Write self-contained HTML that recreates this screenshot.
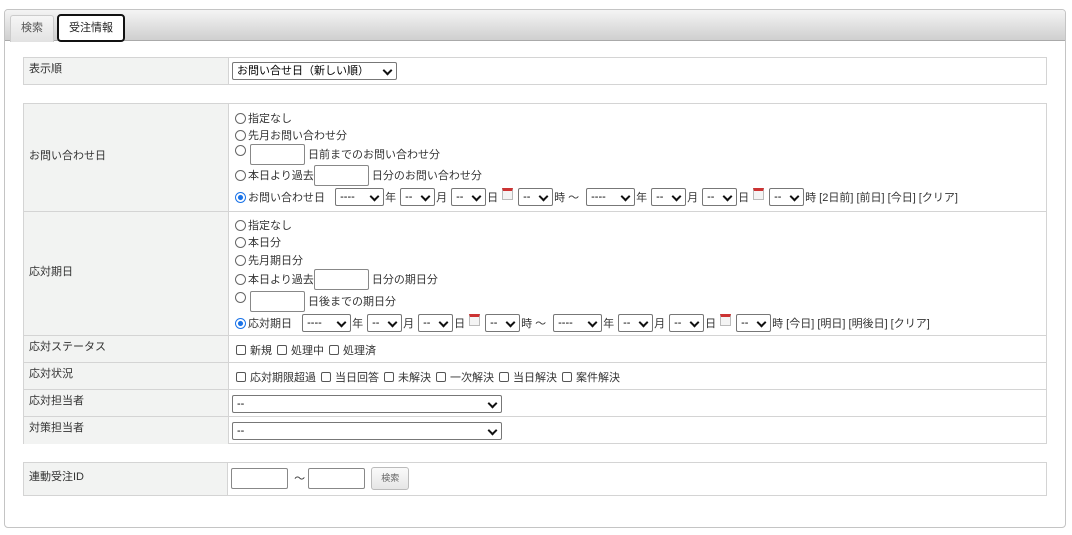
<!DOCTYPE html>
<html><head><meta charset="utf-8"><style>
*{box-sizing:border-box;margin:0;padding:0}
body{width:1072px;height:535px;background:#fff;font-family:"Liberation Sans","Noto Sans CJK JP",sans-serif;font-size:11px;color:#333;position:relative;overflow:hidden}
.panel{position:absolute;left:4px;top:9px;width:1062px;height:519px;border:1px solid #c4c4c4;border-radius:4px}
.hdr{position:absolute;left:0;top:0;width:1060px;height:31px;background:linear-gradient(#f4f4f4,#cfcfcf);border-bottom:1px solid #aaa;border-radius:3px 3px 0 0}
.tab1{position:absolute;left:5px;top:5px;width:44px;height:27px;background:linear-gradient(#f6f6f6,#e2e2e2);border:1px solid #ccc;border-bottom:none;border-radius:3px 3px 0 0;text-align:center;line-height:24px;color:#555}
.tab2{position:absolute;left:52px;top:4px;width:68px;height:28px;background:#fff;border:2px solid #111;border-radius:4px;text-align:center;line-height:24px;color:#222}
.t{position:absolute;border:1px solid #d4d4d4}
.lab{position:absolute;background:#f2f3f2;border-right:1px solid #d4d4d4;left:0;padding-left:5px}
.row{position:absolute;left:0;right:0;border-top:1px solid #d4d4d4}
.ln{position:absolute;left:211px;display:flex;align-items:center;white-space:nowrap;height:20px}
.rd{width:11px;height:11px;border:1px solid #666;border-radius:50%;margin-right:2px;display:inline-block}
.rd.on{border-color:#1a73e8;background:radial-gradient(#1a73e8 35%,#fff 45%)}
.cb{width:10px;height:10px;border:1px solid #555;border-radius:2px;display:inline-block;margin:0 4px 0 5px}
.cb:first-child{margin-left:0}
.in{display:inline-block;width:55px;height:21px;border:1px solid #888;border-radius:2px;background:#fff}
.sel{display:inline-block;height:18px;border:1px solid #777;border-radius:2px;background:#fff;position:relative;padding-left:4px;line-height:16px;font-size:11px;color:#000}
.sel:after{content:"";position:absolute;right:5px;top:4px;width:5px;height:5px;border-right:2px solid #111;border-bottom:2px solid #111;transform:rotate(45deg)}
.d .sel{margin:0 1px 0 4px}
.cal{display:inline-block;width:11px;height:12px;border:1px solid #bbb;border-top:3px solid #c33;background:#f4f4f4;margin:0 1px 0 4px;position:relative;top:-3px}
.d .tl{margin:0 3px}
</style></head><body>
<div class="panel">
<div class="hdr"><div class="tab1">検索</div><div class="tab2">受注情報</div></div>
</div>

<div class="t" style="left:23px;top:57px;width:1024px;height:28px">
 <div class="lab" style="top:0;height:26px;width:205px;line-height:22px">表示順</div>
 <div class="sel" style="position:absolute;left:208px;top:4px;width:165px">お問い合せ日（新しい順）</div>
</div>

<div class="t" style="left:23px;top:103px;width:1024px;height:341px">
 <div class="lab" style="top:0;height:107px;width:205px;line-height:104px">お問い合わせ日</div>
 <div class="ln" style="top:4px"><span class="rd"></span>指定なし</div>
 <div class="ln" style="top:21px"><span class="rd"></span>先月お問い合わせ分</div>
 <div class="ln" style="top:40px"><span class="rd" style="position:relative;top:-4px"></span><span class="in" style="margin-left:2px;width:55px"></span>&nbsp;日前までのお問い合わせ分</div>
 <div class="ln" style="top:61px"><span class="rd"></span>本日より過去<span class="in"></span>&nbsp;日分のお問い合わせ分</div>
 <div class="ln d" style="top:83px"><span class="rd on"></span>お問い合わせ日&nbsp;&nbsp;<span class="sel" style="width:49px">----</span>年<span class="sel" style="width:35px">--</span>月<span class="sel" style="width:35px">--</span>日<span class="cal"></span><span class="sel" style="width:35px">--</span>時<span class="tl">～</span><span class="sel" style="width:49px">----</span>年<span class="sel" style="width:35px">--</span>月<span class="sel" style="width:35px">--</span>日<span class="cal"></span><span class="sel" style="width:35px">--</span>時 [2日前] [前日] [今日] [クリア]</div>

 <div class="row" style="top:107px;height:124px">
  <div class="lab" style="top:0;height:123px;width:205px;line-height:120px">応対期日</div>
  <div class="ln" style="top:3px"><span class="rd"></span>指定なし</div>
  <div class="ln" style="top:20px"><span class="rd"></span>本日分</div>
  <div class="ln" style="top:38px"><span class="rd"></span>先月期日分</div>
  <div class="ln" style="top:57px"><span class="rd"></span>本日より過去<span class="in"></span>&nbsp;日分の期日分</div>
  <div class="ln" style="top:79px"><span class="rd" style="position:relative;top:-4px"></span><span class="in" style="margin-left:2px"></span>&nbsp;日後までの期日分</div>
  <div class="ln d" style="top:101px"><span class="rd on"></span>応対期日&nbsp;&nbsp;<span class="sel" style="width:49px">----</span>年<span class="sel" style="width:35px">--</span>月<span class="sel" style="width:35px">--</span>日<span class="cal"></span><span class="sel" style="width:35px">--</span>時<span class="tl">～</span><span class="sel" style="width:49px">----</span>年<span class="sel" style="width:35px">--</span>月<span class="sel" style="width:35px">--</span>日<span class="cal"></span><span class="sel" style="width:35px">--</span>時 [今日] [明日] [明後日] [クリア]</div>
 </div>
 <div class="row" style="top:231px;height:27px">
  <div class="lab" style="top:0;height:26px;width:205px;line-height:22px">応対ステータス</div>
  <div class="ln" style="top:4px;left:212px"><span class="cb"></span>新規<span class="cb"></span>処理中<span class="cb"></span>処理済</div>
 </div>
 <div class="row" style="top:258px;height:27px">
  <div class="lab" style="top:0;height:26px;width:205px;line-height:22px">応対状況</div>
  <div class="ln" style="top:4px;left:212px"><span class="cb"></span>応対期限超過<span class="cb"></span>当日回答<span class="cb"></span>未解決<span class="cb"></span>一次解決<span class="cb"></span>当日解決<span class="cb"></span>案件解決</div>
 </div>
 <div class="row" style="top:285px;height:27px">
  <div class="lab" style="top:0;height:26px;width:205px;line-height:22px">応対担当者</div>
  <div class="sel" style="position:absolute;left:208px;top:5px;width:270px">--</div>
 </div>
 <div class="row" style="top:312px;height:28px">
  <div class="lab" style="top:0;height:27px;width:205px;line-height:22px">対策担当者</div>
  <div class="sel" style="position:absolute;left:208px;top:5px;width:270px">--</div>
 </div>
</div>

<div class="t" style="left:23px;top:462px;width:1024px;height:34px">
 <div class="lab" style="top:0;height:32px;width:204px;line-height:28px">連動受注ID</div>
 <div class="ln" style="top:5px;left:207px"><span class="in" style="width:57px"></span>&nbsp;&nbsp;～&nbsp;<span class="in" style="width:57px"></span>&nbsp;&nbsp;<span style="display:inline-block;width:38px;height:23px;border:1px solid #bbb;border-radius:3px;background:linear-gradient(#fafafa,#e6e6e6);font-size:9px;color:#666;text-align:center;line-height:21px">検索</span></div>
</div>
</body></html>
